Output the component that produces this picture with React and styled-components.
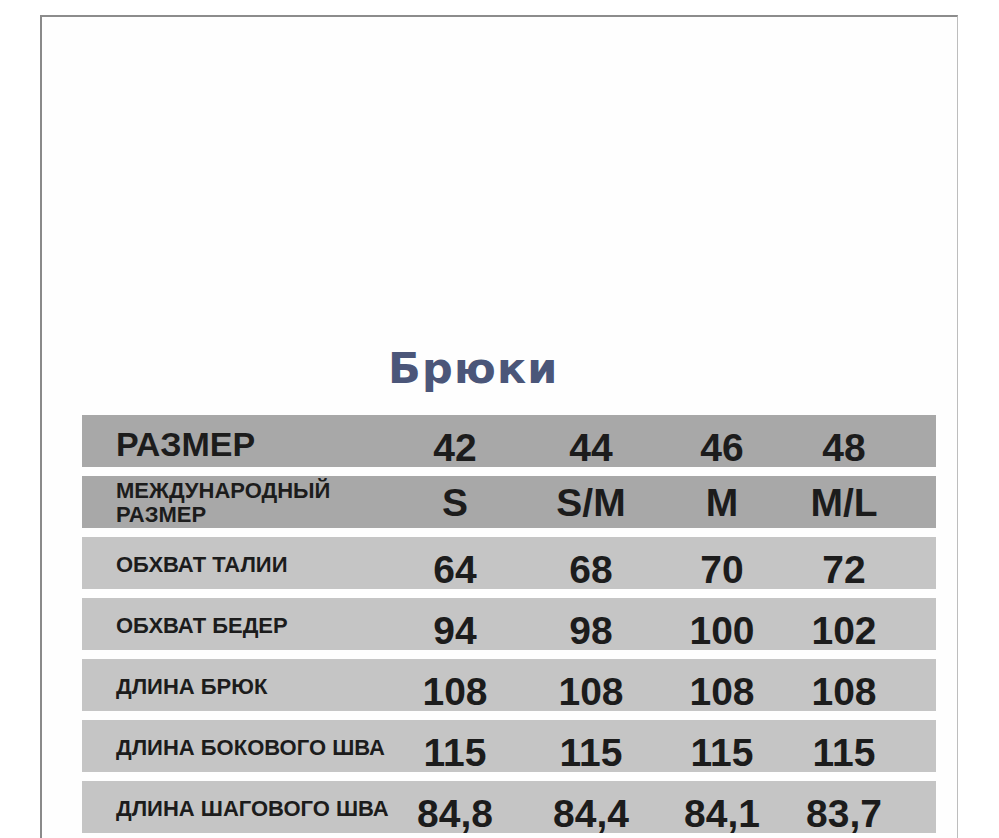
import React from 'react';
import styled, { createGlobalStyle } from 'styled-components';

const GlobalStyle = createGlobalStyle`
    html, body {
        margin: 0;
        padding: 0;
        background: #ffffff;
        overflow: hidden;
    }
    * {
        box-sizing: border-box;
    }
`;

const Page = styled.div`
    padding: 15px 0 0 40px;
    height: 100vh;
`;

const Sheet = styled.div`
    width: 918px;
    height: 100%;
    background: #fefefe;
    border-top: 2px solid #8c8c8c;
    border-left: 2px solid #8a8a8a;
    border-right: 1px solid #bdbdbd;
    padding-top: 326px;
`;

const Title = styled.h1`
    margin: 0;
    padding-left: 346px;
    font-family: "DejaVu Sans", "Liberation Sans", sans-serif;
    font-weight: bold;
    font-size: 43px;
    line-height: 50px;
    letter-spacing: 1.2px;
    color: #4b5679;
`;

const Table = styled.div`
    margin: 22px 0 0 40px;
    width: 854px;
    display: flex;
    flex-direction: column;
    gap: 9px;
`;

const Row = styled.div`
    display: grid;
    grid-template-columns: 308px 130px 142px 120px 124px;
    align-items: center;
    height: 52px;
    background: ${(p) => (p.$dark ? '#a8a8a8' : '#c5c5c5')};
    font-family: "Liberation Sans", Arial, sans-serif;
    font-weight: bold;
    color: #1c1c1c;
`;

const Label = styled.div`
    padding-left: 34px;
    padding-top: ${(p) => (p.$big ? 4 : 2)}px;
    font-size: ${(p) => (p.$big ? 34 : 22)}px;
    line-height: 24px;
    white-space: nowrap;
`;

const Value = styled.div`
    text-align: center;
    font-size: 39px;
    line-height: 42px;
    padding-top: ${(p) => p.$shift}px;
`;

const rows = [
    { label: 'РАЗМЕР', values: ['42', '44', '46', '48'], dark: true, big: true, shift: 12 },
    { label: ['МЕЖДУНАРОДНЫЙ', 'РАЗМЕР'], values: ['S', 'S/M', 'M', 'M/L'], dark: true, shift: 2 },
    { label: 'ОБХВАТ ТАЛИИ', values: ['64', '68', '70', '72'], shift: 12 },
    { label: 'ОБХВАТ БЕДЕР', values: ['94', '98', '100', '102'], shift: 12 },
    { label: 'ДЛИНА БРЮК', values: ['108', '108', '108', '108'], shift: 12 },
    { label: 'ДЛИНА БОКОВОГО ШВА', values: ['115', '115', '115', '115'], shift: 12 },
    { label: 'ДЛИНА ШАГОВОГО ШВА', values: ['84,8', '84,4', '84,1', '83,7'], shift: 12 },
];

const App = () => {
    return (
        <>
            <GlobalStyle />
            <Page>
                <Sheet>
                    <Title>Брюки</Title>
                    <Table>
                        {rows.map((row, i) => (
                            <Row key={i} $dark={row.dark}>
                                <Label $big={row.big}>
                                    {Array.isArray(row.label)
                                        ? row.label.map((line) => <div key={line}>{line}</div>)
                                        : row.label}
                                </Label>
                                {row.values.map((v, j) => (
                                    <Value key={j} $shift={row.shift}>{v}</Value>
                                ))}
                            </Row>
                        ))}
                    </Table>
                </Sheet>
            </Page>
        </>
    );
};

export default App;
